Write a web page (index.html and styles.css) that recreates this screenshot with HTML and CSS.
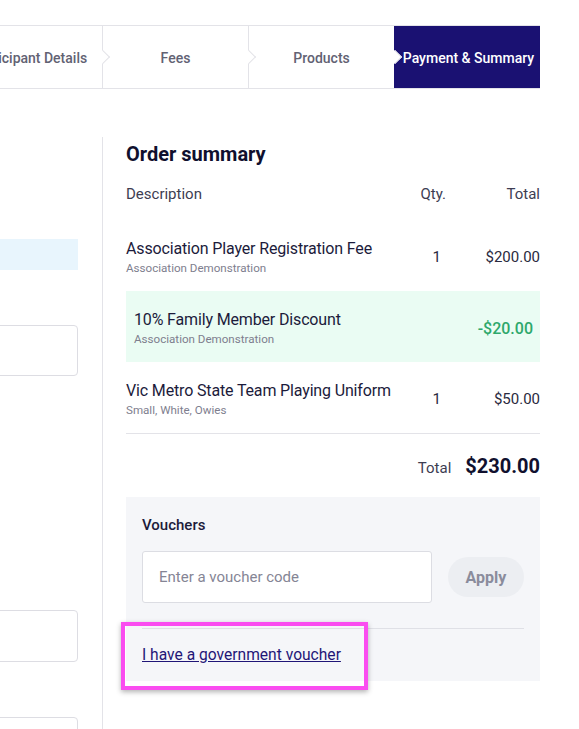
FILE: index.html
```html
<!DOCTYPE html>
<html lang="en">
<head>
<meta charset="utf-8">
<title>Payment &amp; Summary</title>
<link rel="stylesheet" href="styles.css">
</head>
<body>
<nav class="steps">
  <div class="step">Participant Details</div>
  <div class="step">Fees</div>
  <div class="step">Products</div>
  <div class="step active">Payment &amp; Summary</div>
</nav>
<div class="main">
  <div class="left">
    <div class="info-bar"></div>
    <div class="field"></div>
    <div class="field f2"></div>
    <div class="field f3"></div>
  </div>
  <section class="summary">
    <h2 class="title">Order summary</h2>
    <div class="grid head">
      <span>Description</span>
      <span class="qty">Qty.</span>
      <span class="amt">Total</span>
    </div>
    <div class="grid item">
      <div class="info">
        <div class="name">Association Player Registration Fee</div>
        <div class="sub">Association Demonstration</div>
      </div>
      <span class="qty val">1</span>
      <span class="amt">$200.00</span>
    </div>
    <div class="grid item discount">
      <div class="info">
        <div class="name">10% Family Member Discount</div>
        <div class="sub">Association Demonstration</div>
      </div>
      <span class="qty val"></span>
      <span class="amt green">-$20.00</span>
    </div>
    <div class="grid item last">
      <div class="info">
        <div class="name">Vic Metro State Team Playing Uniform</div>
        <div class="sub">Small, White, Owies</div>
      </div>
      <span class="qty val">1</span>
      <span class="amt">$50.00</span>
    </div>
    <div class="total-row">
      <span class="total-label">Total</span>
      <span class="total-value">$230.00</span>
    </div>
    <div class="vouchers">
      <h3 class="v-title">Vouchers</h3>
      <div class="v-form">
        <input class="v-input" type="text" placeholder="Enter a voucher code">
        <button class="v-btn" type="button">Apply</button>
      </div>
      <div class="v-foot">
        <a class="gov-link" href="#">I have a government voucher</a>
      </div>
    </div>
  </section>
</div>
</body>
</html>
```
FILE: styles.css
```css
html, body {
  margin: 0;
  padding: 0;
  background: #ffffff;
  font-family: Roboto, "Liberation Sans", sans-serif;
  overflow: hidden;
}

.steps {
  display: flex;
  justify-content: flex-end;
  width: 540px;
  height: 62px;
  margin-top: 25px;
  border-top: 1px solid #e3e3e8;
  border-bottom: 1px solid #e3e3e8;
}

.step {
  flex: 0 0 146px;
  box-sizing: border-box;
  position: relative;
  display: flex;
  align-items: center;
  justify-content: center;
  padding-top: 2px;
  font-size: 14px;
  font-weight: 500;
  color: #626273;
  border-left: 1px solid #e3e3e8;
  background: #ffffff;
  white-space: nowrap;
}

.step:not(.active)::after {
  content: "";
  position: absolute;
  right: -6px;
  top: 50%;
  width: 9px;
  height: 9px;
  margin-top: -5px;
  background: #ffffff;
  border-top: 1px solid #e3e3e8;
  border-right: 1px solid #e3e3e8;
  transform: rotate(45deg);
  z-index: 1;
}

.step.active {
  background: #1a1172;
  color: #ffffff;
  border-left: none;
  padding-left: 3px;
}

.main {
  display: flex;
  justify-content: flex-end;
  width: 540px;
  margin-top: 48px;
}

.left {
  flex: 0 0 400px;
  box-sizing: border-box;
  padding-right: 24px;
  border-right: 1px solid #e3e3e8;
  min-height: 592px;
}

.info-bar {
  margin-top: 102px;
  height: 31px;
  background: #e8f5fd;
}

.field {
  margin-top: 55px;
  height: 51px;
  box-sizing: border-box;
  border: 1px solid #dddde3;
  border-radius: 4px;
  background: #ffffff;
}

.field.f2 {
  margin-top: 234px;
  height: 52px;
}

.field.f3 {
  margin-top: 55px;
}

.summary {
  flex: 0 0 437px;
  box-sizing: border-box;
  padding-left: 23px;
  color: #1c1b3b;
}

.title {
  margin: 0;
  padding-top: 3px;
  font-size: 20px;
  line-height: 28px;
  font-weight: 700;
  color: #10102e;
}

.grid {
  display: grid;
  grid-template-columns: minmax(0, 1fr) 60px 94px;
  align-items: center;
}

.head {
  height: 52px;
  font-size: 15px;
  color: #3d3d52;
}

.qty {
  text-align: right;
}

.qty.val {
  padding-right: 5px;
}

.amt {
  text-align: right;
}

.item {
  height: 71px;
  font-size: 15px;
}

.item .info {
  padding-top: 5px;
}

.item .amt, .item .qty {
  color: #2a2a40;
  padding-top: 3px;
}

.name {
  font-size: 16px;
  line-height: 20px;
  color: #1c1b3b;
  white-space: nowrap;
  letter-spacing: -0.15px;
}

.sub {
  font-size: 11.6px;
  line-height: 19px;
  color: #7e7e8e;
  white-space: nowrap;
}

.discount {
  background: #eafcf3;
  padding: 0 7px 0 8px;
}

.item .amt.green {
  color: #2ea86b;
  font-weight: 500;
  font-size: 16px;
}

.last {
  border-bottom: 1px solid #e3e3e8;
}

.total-row {
  display: flex;
  justify-content: flex-end;
  align-items: baseline;
  padding: 19px 0 16px;
  line-height: 26px;
}

.total-label {
  font-size: 15px;
  color: #3d3d52;
  margin-right: 14px;
}

.total-value {
  font-size: 20px;
  font-weight: 700;
  color: #10102e;
}

.vouchers {
  position: relative;
  background: #f5f6f9;
  padding: 18px 16px 16px;
}

.vouchers::after {
  content: "";
  position: absolute;
  left: -5px;
  top: 125px;
  width: 247px;
  height: 68px;
  box-sizing: border-box;
  border: 4px solid #fa4cf0;
  box-shadow: 0 2px 5px rgba(0, 0, 0, 0.3);
}

.v-title {
  margin: 0;
  font-size: 15px;
  line-height: 20px;
  font-weight: 500;
  color: #1c1b3b;
}

.v-form {
  display: flex;
  align-items: center;
  gap: 16px;
  margin-top: 16px;
}

.v-input {
  flex: 1;
  min-width: 0;
  height: 52px;
  box-sizing: border-box;
  border: 1px solid #dcdde3;
  border-radius: 3px;
  background: #ffffff;
  padding: 0 16px;
  font-family: Roboto, "Liberation Sans", sans-serif;
  font-size: 15px;
  color: #1c1b3b;
  outline: none;
}

.v-input::placeholder {
  color: #858595;
}

.v-btn {
  flex: 0 0 76px;
  height: 40px;
  border: none;
  border-radius: 20px;
  background: #eceef2;
  color: #8a8c9c;
  font-family: Roboto, "Liberation Sans", sans-serif;
  font-size: 16px;
  font-weight: 700;
  padding: 0;
}

.v-foot {
  margin-top: 25px;
  border-top: 1px solid #dfe0e6;
  padding-top: 16px;
  line-height: 20px;
}

.gov-link {
  font-size: 15.6px;
  color: #1f1577;
  text-decoration: underline;
}
```
